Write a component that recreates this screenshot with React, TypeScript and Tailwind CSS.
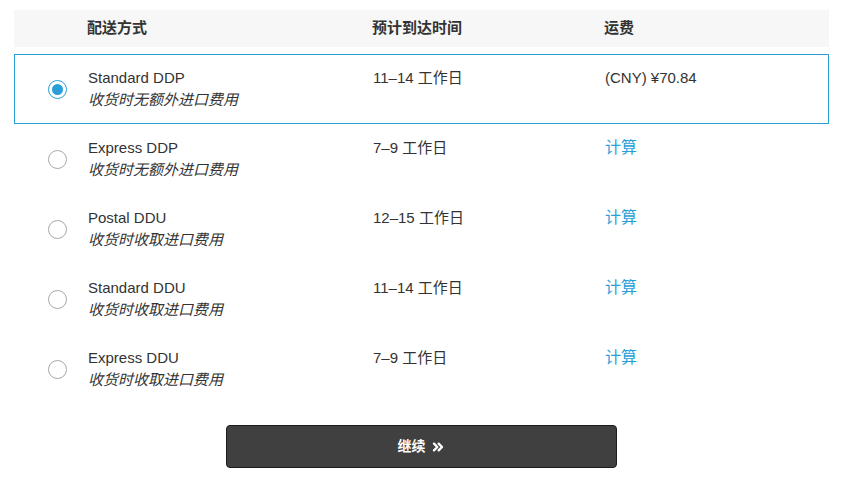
import React from "react";
import { ChevronsRight } from "lucide-react";

const options = [
  { id: 1, name: "Standard DDP", note: "收货时无额外进口费用", eta: "11–14 工作日", price: "(CNY) ¥70.84" },
  { id: 2, name: "Express DDP", note: "收货时无额外进口费用", eta: "7–9 工作日", price: null },
  { id: 3, name: "Postal DDU", note: "收货时收取进口费用", eta: "12–15 工作日", price: null },
  { id: 4, name: "Standard DDU", note: "收货时收取进口费用", eta: "11–14 工作日", price: null },
  { id: 5, name: "Express DDU", note: "收货时收取进口费用", eta: "7–9 工作日", price: null },
];

const cols = "grid grid-cols-[74px_285px_232px_1fr]";

export default function App() {
  const [selected, setSelected] = React.useState(1);

  return (
    <div className="min-h-screen bg-white pt-[10px] pl-[14px] text-[15px] text-[#333] font-['Liberation_Sans','Noto_Sans_CJK_SC',sans-serif]">
      <div className="w-[815px]">
        {/* header */}
        <div className={`${cols} h-[37px] items-center bg-[#f7f7f7] font-bold`}>
          <div />
          <div className="-ml-px">配送方式</div>
          <div className="-ml-px">预计到达时间</div>
          <div className="-ml-px">运费</div>
        </div>

        <div className="mt-[7px]">
          {options.map((o) => {
            const active = o.id === selected;
            return (
              <div
                key={o.id}
                onClick={() => setSelected(o.id)}
                className={`${cols} h-[70px] cursor-pointer border ${active ? "border-[#2a9fd6]" : "border-transparent"}`}
              >
                <div className="flex items-center justify-center pl-[10px]">
                  {active ? (
                    <span className="flex h-[19px] w-[19px] items-center justify-center rounded-full border border-[#2a9fd6]">
                      <span className="h-[11px] w-[11px] rounded-full bg-[#2a9fd6]" />
                    </span>
                  ) : (
                    <span className="h-[19px] w-[19px] rounded-full border border-[#a8a8a8]" />
                  )}
                </div>
                <div className="-ml-px pt-[12px] leading-[22px]">
                  <div>{o.name}</div>
                  <div className="italic">{o.note}</div>
                </div>
                <div className="-ml-px pt-[12px] leading-[22px]">{o.eta}</div>
                <div className="-ml-px pt-[12px] leading-[22px]">
                  {o.price ? o.price : <span className="text-[#2a9fd6] text-[16px]">计算</span>}
                </div>
              </div>
            );
          })}
        </div>

        <div className="mt-[21px] flex justify-center">
          <button className="flex h-[43px] w-[391px] items-center justify-center gap-1 rounded-[4px] border border-[#1c1c1c] bg-[#404040] text-[14px] font-bold text-white">
            继续
            <ChevronsRight size={16} strokeWidth={3.5} />
          </button>
        </div>
      </div>
    </div>
  );
}
